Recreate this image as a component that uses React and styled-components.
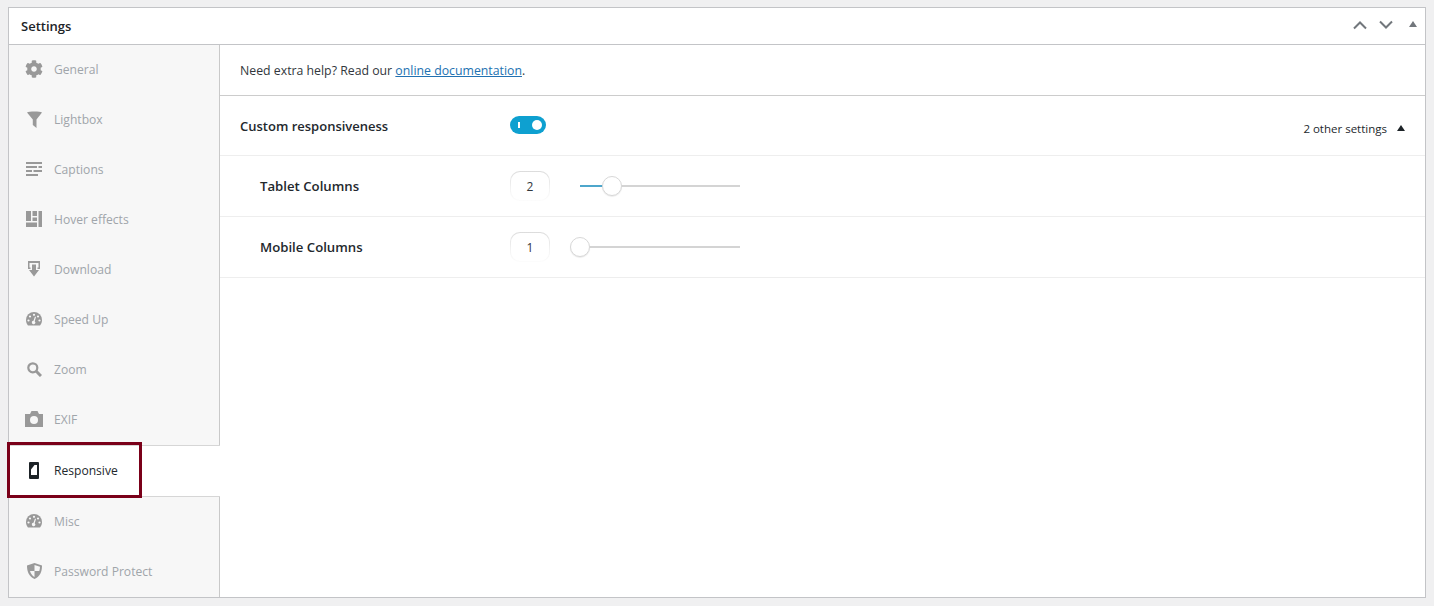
import React from "react";
import styled, { createGlobalStyle } from "styled-components";
import { FaCog } from "react-icons/fa";

const GlobalStyle = createGlobalStyle`
  html, body {
    margin: 0;
    background: #f0f0f1;
  }
  body {
    padding: 7px 8px 8px;
    height: 606px;
    box-sizing: border-box;
    overflow: hidden;
    font-family: "Open Sans", "Noto Sans", "Liberation Sans", sans-serif;
    font-size: 12.3px;
    color: #32373c;
  }
`;

const Box = styled.div`
  width: 1418px;
  height: 591px;
  box-sizing: border-box;
  border: 1px solid #c3c4c7;
  background: #fff;
  display: flex;
  flex-direction: column;
`;

const BoxHeader = styled.div`
  height: 37px;
  flex: none;
  box-sizing: border-box;
  border-bottom: 1px solid #c3c4c7;
  display: flex;
  align-items: center;
  justify-content: space-between;
  padding: 0 8px 0 12px;
`;

const BoxTitle = styled.h2`
  margin: 0;
  font-size: 13px;
  font-weight: 600;
  color: #1d2327;
`;

const HeaderActions = styled.div`
  display: flex;
  align-items: center;
  gap: 12px;
  margin-top: -2px;
`;

const HeaderCaret = styled.span`
  display: flex;
  margin: -2px 0 0 4px;
`;

const Body = styled.div`
  flex: 1;
  display: flex;
  min-height: 0;
`;

const Sidebar = styled.ul`
  width: 211px;
  flex: none;
  margin: 0;
  padding: 0;
  list-style: none;
  background: #f7f7f7;
  display: flex;
  flex-direction: column;
  position: relative;
  font-size: 12.1px;
`;

const SideItem = styled.li`
  height: ${(p) => (p.$active ? "52px" : "50px")};
  box-sizing: border-box;
  display: flex;
  align-items: center;
  gap: 11px;
  padding: 0 0 2px 16px;
  color: ${(p) => (p.$active ? "#23282d" : "#a0a5aa")};
  background: ${(p) => (p.$active ? "#fff" : "transparent")};
  border-top: ${(p) => (p.$active ? "1px solid #d6d6d6" : "none")};
  border-bottom: ${(p) => (p.$active ? "1px solid #d6d6d6" : "none")};
  border-right: ${(p) => (p.$active ? "none" : "1px solid #c9c9c9")};
`;

const SideIcon = styled.span`
  width: 18px;
  height: 18px;
  flex: none;
  display: flex;
  align-items: center;
  justify-content: center;
  color: ${(p) => (p.$active ? "#1d2327" : "#999")};
  font-size: 18px;
`;

const Highlight = styled.div`
  position: absolute;
  left: -2px;
  top: 397px;
  width: 135px;
  height: 56px;
  box-sizing: border-box;
  border: 3px solid #7a0019;
  pointer-events: none;
`;

const Content = styled.div`
  flex: 1;
  min-width: 0;
`;

const HelpRow = styled.div`
  height: 51px;
  box-sizing: border-box;
  border-bottom: 1px solid #ccc;
  padding: 0 20px;
  display: flex;
  align-items: center;
`;

const HelpLink = styled.a`
  color: #2271b1;
  text-decoration: underline;
`;

const Row = styled.div`
  height: ${(p) => (p.$first ? "60px" : "61px")};
  box-sizing: border-box;
  border-bottom: 1px solid #eee;
  padding: 0 20px 0 ${(p) => (p.$nested ? "40px" : "20px")};
  display: flex;
  align-items: center;
`;

const RowLabel = styled.label`
  width: ${(p) => (p.$nested ? "250px" : "270px")};
  flex: none;
  font-size: ${(p) => (p.$nested ? "13.2px" : "13px")};
  font-weight: 600;
  color: #23282d;
`;

const Toggle = styled.span`
  width: 36px;
  height: 18px;
  border-radius: 9px;
  background: #0ea0d0;
  margin-top: -1px;
  display: flex;
  align-items: center;
  justify-content: space-between;
  padding: 0 4px 0 8px;
  box-sizing: border-box;
  &::before {
    content: "";
    width: 2px;
    height: 6px;
    background: #fff;
  }
  &::after {
    content: "";
    width: 10px;
    height: 10px;
    border-radius: 50%;
    background: #fff;
  }
`;

const OtherSettings = styled.span`
  margin-left: auto;
  display: flex;
  align-items: center;
  gap: 10px;
  font-size: 11.5px;
  color: #23282d;
  margin-top: 5px;
`;

const NumberBox = styled.span`
  width: 40px;
  height: 30px;
  flex: none;
  box-sizing: border-box;
  border: 1px solid transparent;
  border-radius: 10px;
  background: linear-gradient(#fff, #fff) padding-box,
    linear-gradient(#dcdcdc 0%, #f4f4f4 60%, #fcfcfc 100%) border-box;
  display: flex;
  align-items: center;
  justify-content: center;
  font-size: 12px;
  color: #32373c;
`;

const Track = styled.div`
  width: 160px;
  height: 2px;
  margin-left: 30px;
  background: #d4d4d4;
  position: relative;
  margin-top: -1px;
`;

const TrackFill = styled.div`
  height: 100%;
  background: #4ea6cb;
`;

const Thumb = styled.div`
  position: absolute;
  top: -9px;
  width: 20px;
  height: 20px;
  margin-left: -10px;
  box-sizing: border-box;
  border-radius: 50%;
  background: #fff;
  border: 1px solid #d8d8d8;
  box-shadow: 0 1px 1px rgba(0, 0, 0, 0.08);
`;

const Chevron = ({ up }) => (
  <svg width="14" height="10" viewBox="0 0 14 10">
    <path
      d={up ? "M1 8.5 7 2.5l6 6" : "M1 1.5l6 6 6-6"}
      fill="none"
      stroke="#72777c"
      strokeWidth="2"
    />
  </svg>
);

const Caret = ({ color }) => (
  <svg width="8" height="6" viewBox="0 0 8 6">
    <path d="M4 0 8 6H0z" fill={color} />
  </svg>
);

const FunnelIcon = () => (
  <svg width="15" height="17" viewBox="0 0 15 17" fill="currentColor">
    <path d="M0 1.500C2 .300 13 .300 15 1.500L9.500 8.500V17L5.800 14V8.500z" />
  </svg>
);

const CaptionsIcon = () => (
  <svg width="17" height="14" viewBox="0 0 17 14" fill="currentColor">
    <path d="M0 0h16v2H0zM0 4h11v2H0zM12.500 4H16v2h-3.500zM0 8h6v2H0zM7.500 8H16v2H7.500zM0 12h12v2H0z" />
  </svg>
);

const HoverIcon = () => (
  <svg width="16" height="16" viewBox="0 0 16 16" fill="currentColor">
    <path d="M0 0h5v10H0zM6.500 0H11v5H6.500zM6.500 6.500H11V10H6.500zM12.500 0H16v16h-3.500zM0 11.500h11V16H0z" />
  </svg>
);

const DownloadIcon = () => (
  <svg width="14" height="16" viewBox="0 0 14 16" fill="currentColor">
    <path d="M1 0h12v8h-2.500V6.500h1V2h-9v4.500h1V8H1z" />
    <path d="M5 3.500h4V9h3l-5 6.500L2 9h3z" />
  </svg>
);

const GaugeIcon = () => (
  <svg width="16" height="14" viewBox="0 0 16 14">
    <path d="M8 0a8 8 0 0 1 8 8c0 2.300-.7 4-2 5.500H2C.7 12 0 10.300 0 8a8 8 0 0 1 8-8z" fill="currentColor" />
    <g fill="#f7f7f7">
      <circle cx="4" cy="4.500" r="1.100" />
      <circle cx="8" cy="2.800" r="1.100" />
      <circle cx="2.500" cy="8.500" r="1.100" />
      <circle cx="13.500" cy="8.500" r="1.100" />
      <circle cx="12" cy="4.500" r="1.100" />
      <path d="M9 4.500l1 .4-1.300 4.300a1.700 1.700 0 1 1-1.200-.4z" />
    </g>
  </svg>
);

const MagnifierIcon = () => (
  <svg width="15" height="15" viewBox="0 0 15 15" fill="none" stroke="currentColor">
    <circle cx="5.800" cy="5.800" r="4.500" strokeWidth="2.200" />
    <path d="M9 9l5 5" strokeWidth="3" />
  </svg>
);

const CameraIcon = () => (
  <svg width="18" height="16" viewBox="0 0 18 16">
    <path d="M0 3h5L6.500 0h6L14 3h4v13H0z" fill="currentColor" />
    <circle cx="9" cy="9" r="4" fill="#f7f7f7" />
  </svg>
);

const PhoneIcon = () => (
  <svg width="10" height="17" viewBox="0 0 10 17">
    <rect width="10" height="17" rx="1" fill="currentColor" />
    <path d="M2 3h6v10H2z" fill="#fff" />
    <path d="M2 3h3.500L2 7.500z" fill="currentColor" />
  </svg>
);

const ShieldIcon = () => (
  <svg width="15" height="16" viewBox="0 0 15 16">
    <path d="M7.500 0 15 2.500C15 9 13 13.500 7.500 16 2 13.500 0 9 0 2.500z" fill="currentColor" />
    <path d="M7.500 2 13 3.800c-.1 1.600-.3 3-.7 4.200H7.500zM7.500 8v6c-2.200-1.200-3.700-3.300-4.500-6z" fill="#f7f7f7" />
  </svg>
);

const tabs = [
  { label: "General", icon: <FaCog /> },
  { label: "Lightbox", icon: <FunnelIcon /> },
  { label: "Captions", icon: <CaptionsIcon /> },
  { label: "Hover effects", icon: <HoverIcon /> },
  { label: "Download", icon: <DownloadIcon /> },
  { label: "Speed Up", icon: <GaugeIcon /> },
  { label: "Zoom", icon: <MagnifierIcon /> },
  { label: "EXIF", icon: <CameraIcon /> },
  { label: "Responsive", icon: <PhoneIcon />, active: true },
  { label: "Misc", icon: <GaugeIcon /> },
  { label: "Password Protect", icon: <ShieldIcon /> },
];

const Slider = ({ percent }) => (
  <Track>
    <TrackFill style={{ width: `${percent}%` }} />
    <Thumb style={{ left: `${percent}%` }} />
  </Track>
);

export default function App() {
  return (
    <>
      <GlobalStyle />
      <Box>
        <BoxHeader>
          <BoxTitle>Settings</BoxTitle>
          <HeaderActions>
            <Chevron up />
            <Chevron />
            <HeaderCaret>
              <Caret color="#72777c" />
            </HeaderCaret>
          </HeaderActions>
        </BoxHeader>
        <Body>
          <Sidebar>
            {tabs.map((t) => (
              <SideItem key={t.label} $active={t.active}>
                <SideIcon $active={t.active}>{t.icon}</SideIcon>
                {t.label}
              </SideItem>
            ))}
            <Highlight />
          </Sidebar>
          <Content>
            <HelpRow>
              <span>
                Need extra help? Read our <HelpLink href="#">online documentation</HelpLink>.
              </span>
            </HelpRow>
            <Row $first>
              <RowLabel>Custom responsiveness</RowLabel>
              <Toggle />
              <OtherSettings>
                2 other settings <Caret color="#1d2327" />
              </OtherSettings>
            </Row>
            <Row $nested>
              <RowLabel $nested>Tablet Columns</RowLabel>
              <NumberBox>2</NumberBox>
              <Slider percent={20} />
            </Row>
            <Row $nested>
              <RowLabel $nested>Mobile Columns</RowLabel>
              <NumberBox>1</NumberBox>
              <Slider percent={0} />
            </Row>
          </Content>
        </Body>
      </Box>
    </>
  );
}
